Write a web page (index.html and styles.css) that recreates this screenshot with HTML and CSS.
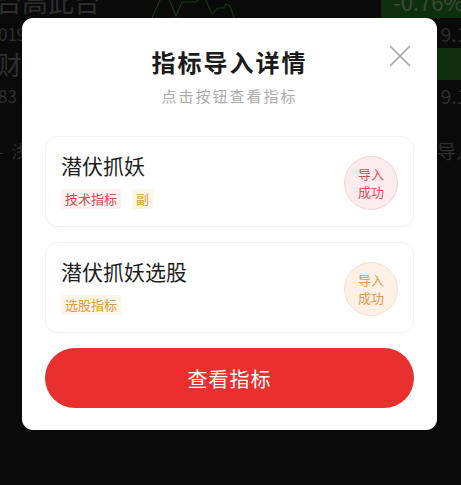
FILE: index.html
```html
<!DOCTYPE html>
<html lang="zh-CN">
<head>
    <meta charset="UTF-8">
    <meta name="viewport" content="width=device-width, initial-scale=1.0">
    <title>指标导入详情</title>
    <link rel="stylesheet" href="styles.css">
</head>
<body>
    <!-- page behind the dialog, dimmed -->
    <div class="bg-list">
        <div class="bg-row bg-row-top">
            <span class="bg-name">台高此台</span>
            <span class="bg-change green">-0.76%</span>
        </div>
        <div class="bg-row bg-row-sub">
            <span class="bg-code">019</span>
            <span class="bg-price">9.1</span>
        </div>
        <div class="bg-row bg-row-main">
            <span class="bg-name">财富</span>
            <span class="bg-change green">6%</span>
        </div>
        <div class="bg-row bg-row-sub">
            <span class="bg-code">83</span>
            <span class="bg-price">9.1</span>
        </div>
        <div class="bg-row bg-row-foot">
            <span class="bg-code">-&nbsp;&nbsp;浅</span>
            <span class="bg-code">导入</span>
        </div>
        <svg class="bg-chart" width="110" height="20" viewBox="0 0 110 20">
            <polyline points="0,20 8,2 16,-2 24,18 30,4 44,4 52,-2 60,16 66,10 72,10 74,6 78,8 82,20"
                fill="none" stroke="#17381b" stroke-width="1.2"/>
        </svg>
    </div>

    <div class="overlay">
        <section class="dialog">
            <button class="dialog-close" aria-label="关闭">
                <svg width="24" height="24" viewBox="0 0 24 24">
                    <path d="M2 2 L22 22 M22 2 L2 22" stroke="#a3a3a3" stroke-width="1.6" fill="none"/>
                </svg>
            </button>
            <h1 class="dialog-title">指标导入详情</h1>
            <p class="dialog-sub">点击按钮查看指标</p>

            <div class="card">
                <div class="card-info">
                    <div class="card-name">潜伏抓妖</div>
                    <div class="card-tags">
                        <span class="tag tag-red">技术指标</span>
                        <span class="tag tag-orange">副</span>
                    </div>
                </div>
                <div class="badge badge-red">
                    <span>导入</span>
                    <span>成功</span>
                </div>
            </div>

            <div class="card">
                <div class="card-info">
                    <div class="card-name">潜伏抓妖选股</div>
                    <div class="card-tags">
                        <span class="tag tag-orange">选股指标</span>
                    </div>
                </div>
                <div class="badge badge-orange">
                    <span>导入</span>
                    <span>成功</span>
                </div>
            </div>

            <button class="btn-view">查看指标</button>
        </section>
    </div>
</body>
</html>
```

FILE: styles.css
```css
* {
    box-sizing: border-box;
}

body {
    margin: 0;
    width: 461px;
    height: 485px;
    overflow: hidden;
    background-color: #0a0a0a;
    font-family: "Noto Sans CJK SC", "Noto Sans", sans-serif;
}

.bg-list {
    position: relative;
    margin-top: -16px;
    color: #2f2f2f;
}

.bg-row {
    display: flex;
    justify-content: space-between;
    align-items: center;
}

.bg-row-top {
    height: 34px;
}

.bg-row-main {
    height: 32px;
}

.bg-row-sub {
    height: 30px;
}

.bg-row-foot {
    height: 60px;
    padding-top: 20px;
}

.bg-name {
    font-size: 26px;
    line-height: 30px;
    margin-left: -4px;
}

.bg-code {
    font-size: 17px;
    margin-left: -2px;
}

.bg-row-foot .bg-code:last-child {
    margin-right: -14px;
    font-size: 19px;
}

.bg-price {
    font-size: 19px;
    margin-right: -6px;
}

.bg-change {
    width: 80px;
    height: 100%;
    font-size: 22px;
    padding-left: 12px;
    display: flex;
    align-items: center;
    white-space: nowrap;
    overflow: hidden;
}

.green {
    background-color: #0d2f0b;
    color: #3c4a3a;
}

.bg-chart {
    position: absolute;
    top: 14px;
    left: 152px;
}

.overlay {
    position: fixed;
    inset: 0;
}

.dialog {
    position: absolute;
    top: 18px;
    left: 22px;
    width: 415px;
    height: 412px;
    background-color: #fff;
    border-radius: 11px;
    padding: 28px 23px 22px;
    display: flex;
    flex-direction: column;
}

.dialog-close {
    position: absolute;
    top: 26px;
    right: 25px;
    width: 24px;
    height: 24px;
    padding: 0;
    border: 0;
    background: none;
}

.dialog-close svg {
    display: block;
}

.dialog-title {
    margin: 0;
    text-align: center;
    font-size: 24px;
    line-height: 32px;
    letter-spacing: 2px;
    font-weight: 700;
    color: #1b1b1b;
}

.dialog-sub {
    margin: 8px 0 0;
    text-align: center;
    font-size: 15px;
    line-height: 20px;
    letter-spacing: 2px;
    color: #ababab;
}

.card {
    display: flex;
    align-items: center;
    justify-content: space-between;
    height: 91px;
    margin-top: 15px;
    padding: 15px 15px 18px;
    border: 1px solid #f2f2f2;
    border-radius: 13px;
    box-shadow: 0 1px 3px rgba(0, 0, 0, 0.03);
}

.dialog-sub + .card {
    margin-top: 30px;
}

.card-name {
    font-size: 21px;
    line-height: 28px;
    color: #1e1e1e;
}

.card-tags {
    display: flex;
    gap: 11px;
    margin-top: 10px;
}

.tag {
    font-size: 13px;
    line-height: 20px;
    padding: 0 4px;
    border-radius: 2px;
}

.tag-red {
    background-color: #fdf0f0;
    color: #cc4a4e;
}

.tag-orange {
    background-color: #fdf5e9;
    color: #e0983f;
}

.badge {
    width: 54px;
    height: 54px;
    border-radius: 50%;
    display: flex;
    flex-direction: column;
    align-items: center;
    justify-content: center;
    font-size: 13px;
    line-height: 18px;
    margin-top: 6px;
}

.badge-red {
    background-color: #fcebec;
    border: 1px solid #f0d3d6;
    color: #d4505a;
}

.badge-orange {
    background-color: #fdf1e6;
    border: 1px solid #f3e1d0;
    color: #e4974a;
}

.btn-view {
    margin-top: 15px;
    height: 60px;
    border: 0;
    border-radius: 30px;
    background-color: #e8302f;
    color: #fff;
    font-family: inherit;
    font-size: 20px;
    letter-spacing: 1px;
}
```
